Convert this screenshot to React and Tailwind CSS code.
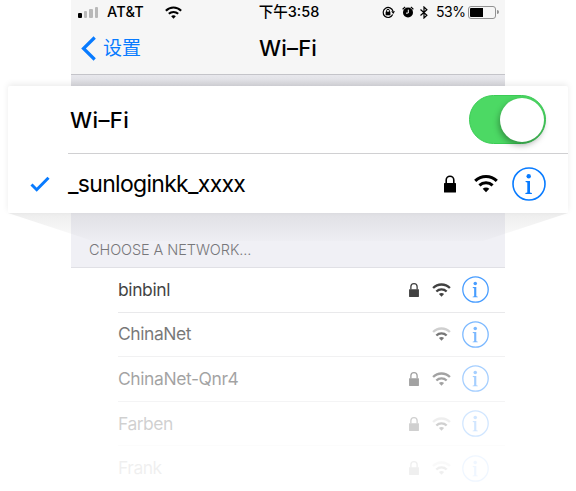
import React from "react";

function Wifi({ className, dim = false }) {
  return (
    <svg className={className} viewBox="0 0 24 18" fill="none" stroke="currentColor" strokeWidth="3">
      <path d="M1.2 6.4C7.2.4 16.8.4 22.8 6.4" opacity={dim ? 0.35 : 1} />
      <path d="M5.4 10.9c3.7-3.5 9.5-3.5 13.2 0" />
      <path d="M8.7 14.2c1.9-1.7 4.7-1.7 6.6 0L12 17.7z" fill="currentColor" stroke="none" />
    </svg>
  );
}

function Lock({ className }) {
  return (
    <svg className={className} viewBox="0 0 12 17" fill="none">
      <rect y="7.5" width="12" height="9.5" rx="0.5" fill="currentColor" />
      <path d="M2.2 8V4.6a3.8 3.8 0 0 1 7.6 0V8" stroke="currentColor" strokeWidth="1.6" />
    </svg>
  );
}

function Info({ className }) {
  return (
    <svg className={className} viewBox="0 0 34 34" fill="none">
      <circle cx="17" cy="17" r="16" stroke="currentColor" strokeWidth="1.6" />
      <circle cx="16.7" cy="9.3" r="2.2" fill="currentColor" />
      <path d="M13.6 14h4.4v11.4l1.9.6v.9h-6.5V26l1.9-.6V15.4l-1.7-.4z" fill="currentColor" />
    </svg>
  );
}

const networks = [
  { name: "binbinl", lock: true, tone: "opacity-[0.74]", text: "tracking-[-0.4px]", line: "border-[#e9e9eb]" },
  { name: "ChinaNet", lock: false, dim: true, tone: "opacity-[0.53]", text: "tracking-[-0.45px]", line: "border-[#f1f1f2]" },
  { name: "ChinaNet-Qnr4", lock: true, tone: "opacity-[0.36]", text: "tracking-[-0.42px]", line: "border-[#f4f4f5]" },
  { name: "Farben", lock: true, dim: true, tone: "opacity-[0.18]", text: "tracking-[-0.5px]", line: "border-[#fcfcfc]" },
  { name: "Frank", lock: true, dim: true, tone: "opacity-[0.06]", text: "tracking-[-0.5px]", line: "border-transparent" },
];

function StatusBar() {
  return (
    <div className="grid h-6 grid-cols-[174px_88px_172px] items-center text-black">
      <div className="flex items-center pl-[7px]">
        <div className="flex items-end gap-[2px]">
          <i className="h-[5px] w-[3.5px] rounded-[1px] bg-black" />
          <i className="h-[7px] w-[3.5px] rounded-[1px] bg-[#b9b9b9]" />
          <i className="h-[9px] w-[3.5px] rounded-[1px] bg-[#b9b9b9]" />
          <i className="h-[11px] w-[3.5px] rounded-[1px] bg-[#b9b9b9]" />
        </div>
        <span className="ml-[9px] w-[37px] text-[14.5px] leading-6 font-medium tracking-[0.2px] whitespace-nowrap">AT&T</span>
        <Wifi className="ml-[21px] h-[13px] w-[17px]" />
      </div>
      <span className="text-center text-[14.5px] leading-6 font-medium whitespace-nowrap">下午3:58</span>
      <div className="flex items-center justify-end pr-[6px]">
        <svg className="h-[13px] w-[13px]" viewBox="0 0 13 13" fill="none" stroke="currentColor" strokeWidth="1.2">
          <path d="M10.7 8.6A5 5 0 1 1 11 5.2" />
          <path d="M9.2 5.3h3.8l-1.8 2.6z" fill="currentColor" stroke="none" />
          <path d="M3.6 5.7h4.8v3.6H3.6z" fill="currentColor" stroke="none" />
          <path d="M4.6 6V4.7a1.4 1.4 0 0 1 2.8 0V6" strokeWidth="1" />
        </svg>
        <svg className="ml-[7px] h-[12px] w-[12px]" viewBox="0 0 12 12" fill="none">
          <circle cx="6" cy="6.5" r="5" fill="black" />
          <path d="M.7 3.4A7 7 0 0 1 3.2 1M11.3 3.4A7 7 0 0 0 8.8 1" stroke="black" strokeWidth="1.3" />
          <path d="M6.3 3.6V7L4 7.2" stroke="white" strokeWidth="1" />
        </svg>
        <svg className="ml-[6px] h-[13px] w-[8px]" viewBox="0 0 8 13" fill="none" stroke="currentColor" strokeWidth="1.2">
          <path d="M.5 3.5l6.4 5.8L4 12V1l2.9 2.7L.5 9.5" />
        </svg>
        <span className="ml-[8px] w-[28px] text-[14px] leading-6 tracking-[-0.4px] whitespace-nowrap">53%</span>
        <div className="ml-[4px] flex h-[13px] w-[28px] rounded-[3px] border border-[#929292] p-px">
          <div className="w-[13px] rounded-l-[1px] bg-black" />
        </div>
        <i className="ml-px h-[4px] w-[2px] rounded-r-full bg-[#929292]" />
      </div>
    </div>
  );
}

export default function App() {
  return (
    <main className="relative flex h-[491px] w-[576px] flex-col overflow-hidden bg-white font-['Inter','Noto_Sans_CJK_SC',sans-serif]">
      <header className="ml-[71px] h-[75px] w-[434px] shrink-0 border-b border-[#c4c4c9] bg-[#f6f6f6]">
        <StatusBar />
        <div className="grid h-[48px] grid-cols-[174px_86px_174px] items-center">
          <div className="flex items-center pl-[10px] text-[#087bff]">
            <svg className="h-[25px] w-[15px]" viewBox="0 0 15 25" fill="none" stroke="currentColor" strokeWidth="3.2">
              <path d="M13.7 1.5L2.5 12.5l11.2 11" />
            </svg>
            <span className="ml-[7px] pt-[2px] text-[19px] leading-6">设置</span>
          </div>
          <h1 className="pb-px text-center text-[22px] leading-6 font-medium tracking-[0.2px] whitespace-nowrap">Wi–Fi</h1>
        </div>
      </header>
      <div className="ml-[71px] h-[11px] w-[434px] shrink-0 bg-linear-to-b from-[#e8e8ed] to-[#d9d9de]" />

      <section className="relative z-10 ml-[8px] h-[127px] w-[560px] shrink-0 rounded-[2px] bg-white shadow-[0_-2px_6px_rgba(0,0,0,0.08)]">
        <div className="ml-[60px] flex h-[68px] items-center justify-between border-b border-[#d0d0d2] pr-[22px]">
          <span className="ml-[2px] pt-px text-[22px] leading-6 font-medium tracking-[0.4px]">Wi–Fi</span>
          <div className="flex h-[49px] w-[77px] items-center justify-end rounded-full border border-[#3bcc55] bg-[#4cd964] pr-px">
            <div className="h-[44px] w-[44px] rounded-full bg-white shadow-[-1px_3px_6px_rgba(0,0,0,0.35)]" />
          </div>
        </div>
        <div className="flex h-[59px] items-center pl-[22px]">
          <svg className="h-[16px] w-[20px] text-[#087bff]" viewBox="0 0 20 16" fill="none" stroke="currentColor" strokeWidth="3">
            <path d="M1.5 8.5l5.2 5.2L18.5 1.7" />
          </svg>
          <span className="ml-[18px] w-[376px] pt-px text-[23px] leading-7 tracking-[-0.7px]">_sunloginkk_xxxx</span>
          <Lock className="h-[18px] w-[12px]" />
          <Wifi className="ml-[18px] h-[19px] w-[24px]" />
          <Info className="ml-[14px] h-[34px] w-[34px] text-[#087bff]" />
        </div>
      </section>

      <svg className="absolute top-[213px] left-[8px] h-[28px] w-[560px]" viewBox="0 0 560 28" fill="none">
        <defs>
          <linearGradient id="cast" x1="0" y1="0" x2="0" y2="1">
            <stop stopColor="#777" stopOpacity="0.13" />
            <stop offset="1" stopColor="#777" stopOpacity="0.02" />
          </linearGradient>
        </defs>
        <path d="M0 0H560L475 28H85Z" fill="url(#cast)" />
      </svg>
      <div className="ml-[71px] flex h-[55px] w-[434px] shrink-0 items-end border-b border-[#e0e0e5] bg-[#f0f0f5] pb-[7px] pl-[18px]">
        <span className="text-[14.5px] leading-5 font-light tracking-[-0.08px] text-[#77777a]">CHOOSE A NETWORK...</span>
      </div>

      <ul className="ml-[118px] w-[387px] shrink-0">
        {networks.map((n) => (
          <li key={n.name} className={`h-[44.6px] border-b ${n.line}`}>
            <div className={`flex h-full items-center ${n.tone}`}>
              <span className={`w-[291px] text-[17.5px] leading-6 ${n.text}`}>{n.name}</span>
              {n.lock ? <Lock className="h-[14px] w-[10px]" /> : <i className="w-[10px]" />}
              <Wifi dim={n.dim} className="ml-[13px] h-[14px] w-[19px]" />
              <Info className="ml-[11px] h-[27px] w-[27px] text-[#087bff]" />
            </div>
          </li>
        ))}
      </ul>
    </main>
  );
}
